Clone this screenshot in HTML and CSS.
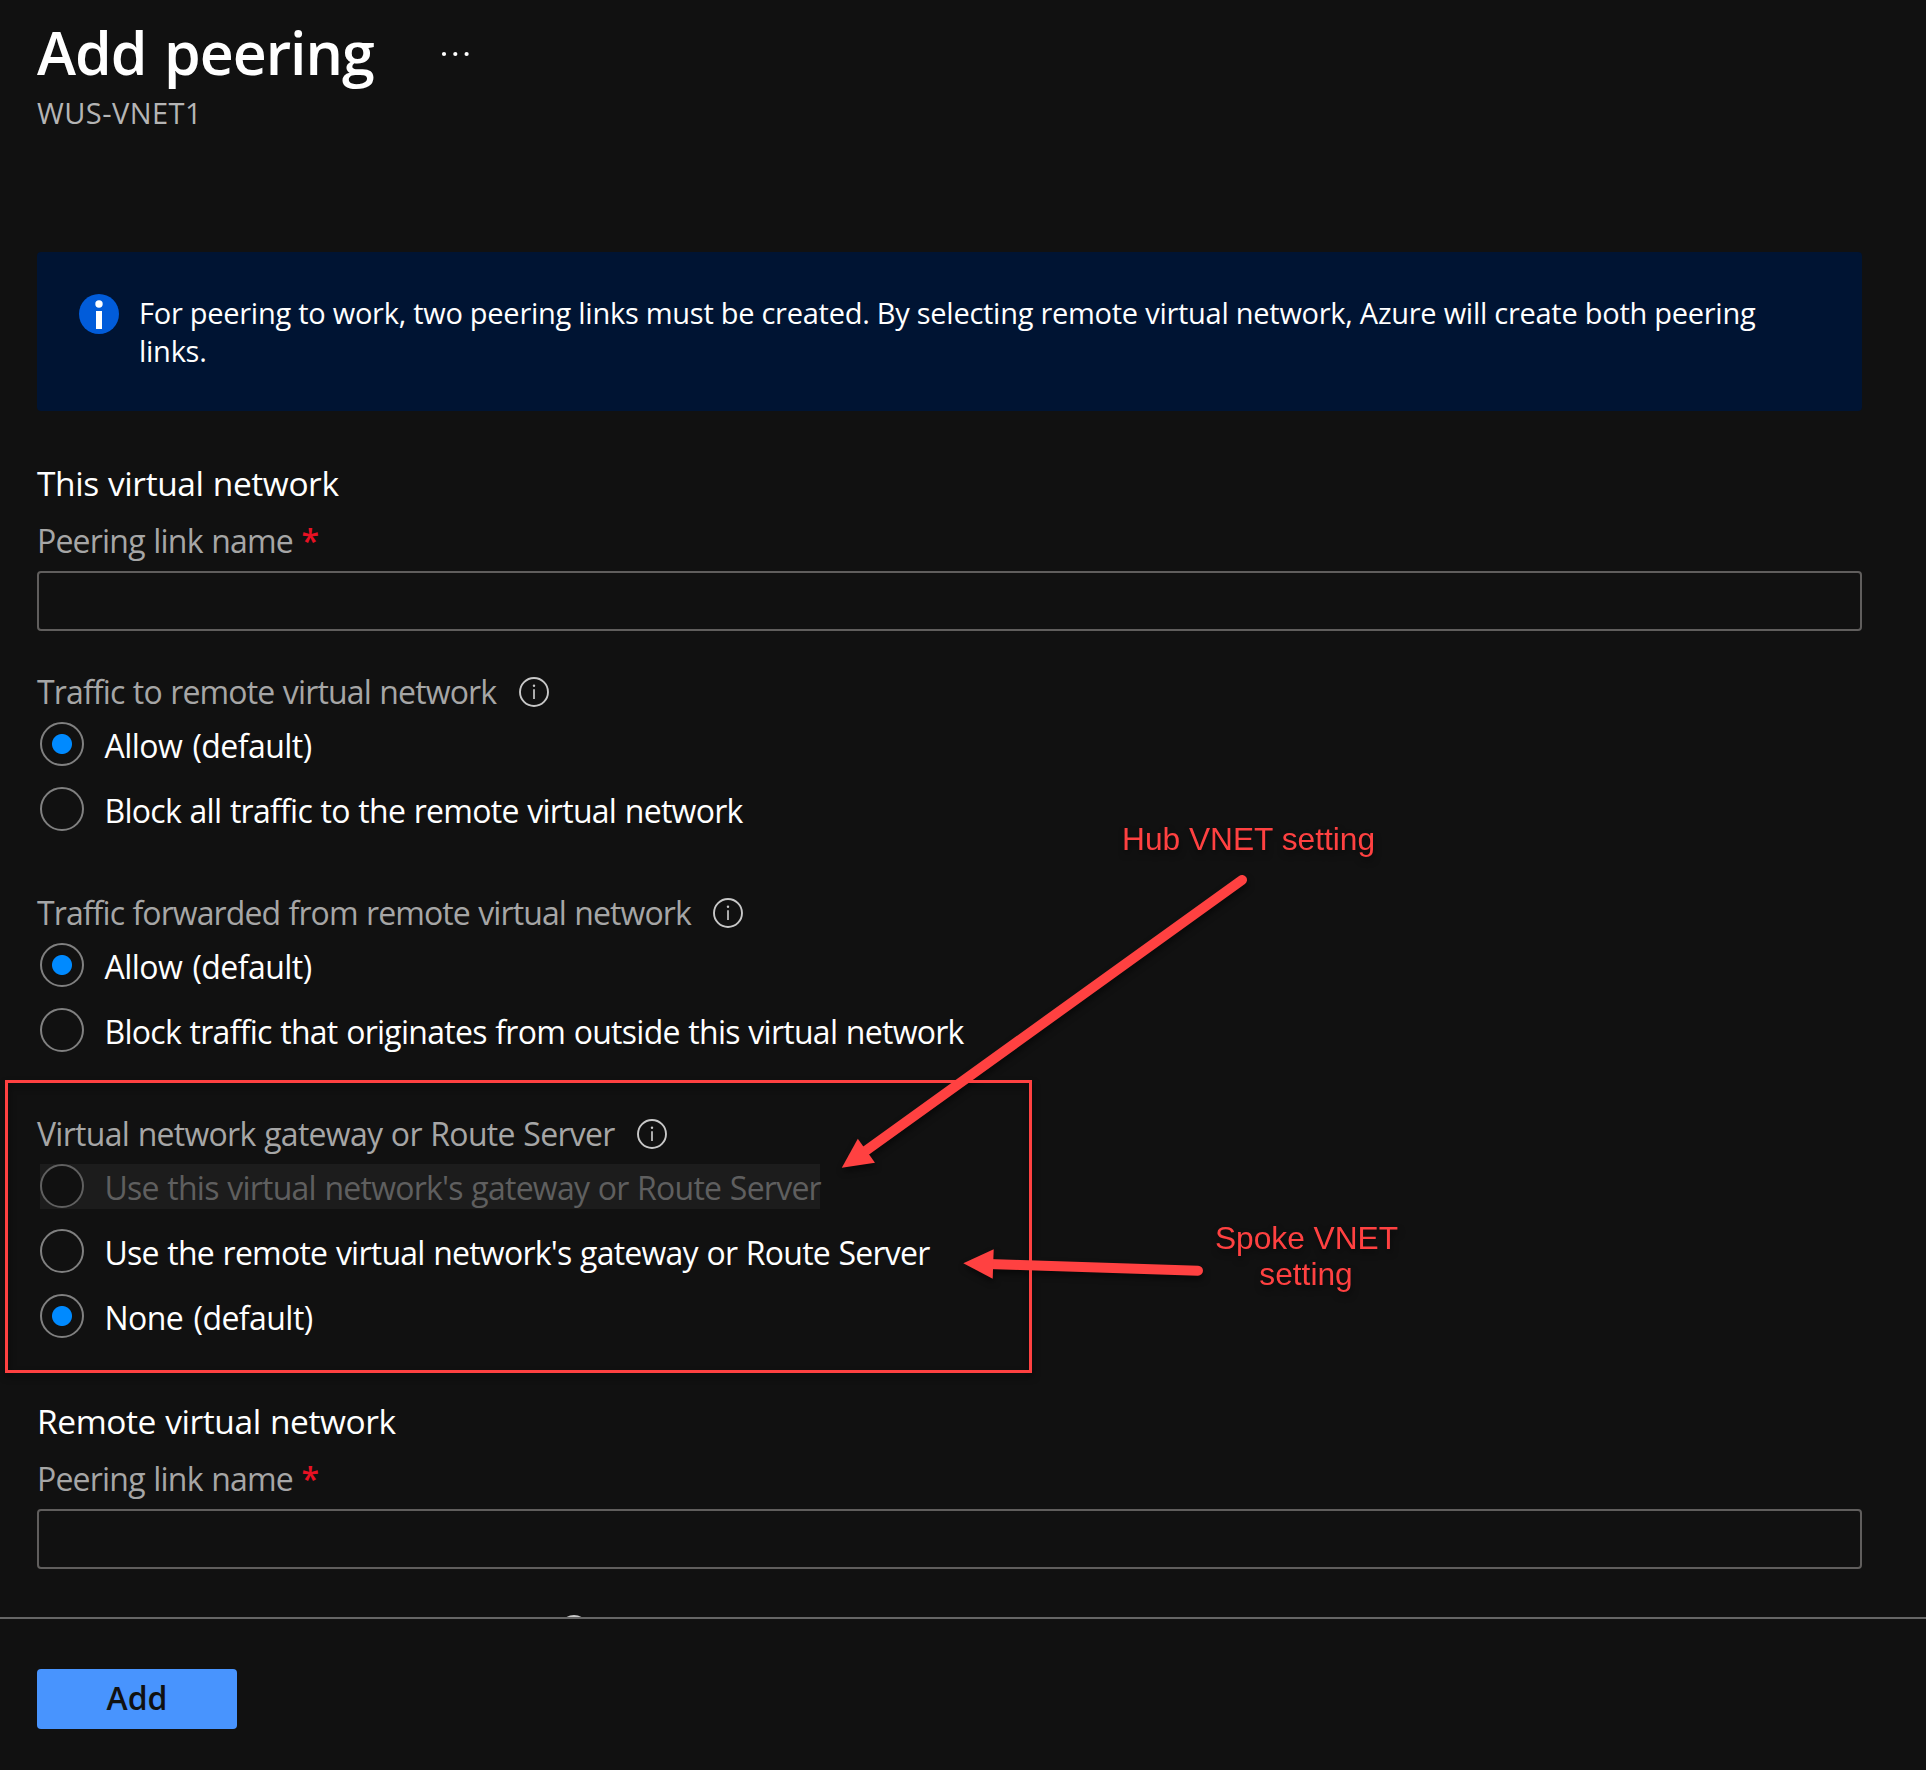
FILE: index.html
```html
<!DOCTYPE html>
<html lang="en">
<head>
<meta charset="utf-8">
<title>Add peering</title>
<link rel="stylesheet" href="styles.css">
</head>
<body>
<svg class="defs" width="0" height="0">
  <symbol id="info" viewBox="0 0 30 30">
    <circle cx="15" cy="15" r="14" fill="none" stroke="currentColor" stroke-width="1.9"/>
    <path d="M15 12.3v9.8" stroke="currentColor" stroke-width="1.7"/>
    <circle cx="15" cy="8.7" r="1.2" fill="currentColor"/>
  </symbol>
</svg>
<main class="blade">
  <header class="header">
    <div class="title-row">
      <h1 class="title">Add peering</h1>
      <svg class="more" viewBox="0 0 28 6"><circle cx="3" cy="3" r="2.1"/><circle cx="14.3" cy="3" r="2.1"/><circle cx="25.6" cy="3" r="2.1"/></svg>
    </div>
    <div class="subtitle">WUS-VNET1</div>
  </header>

  <div class="banner">
    <svg class="banner-icon" viewBox="0 0 40 40"><circle cx="20" cy="20" r="20" fill="#015cda"/><circle cx="20" cy="10" r="3.7" fill="#fff"/><path d="M17 17h6v18h-6z" fill="#fff"/></svg>
    <p class="banner-text">For peering to work, two peering links must be created. By selecting remote virtual network, Azure will create both peering<br>links.</p>
  </div>

  <section class="section">
    <h2 class="heading">This virtual network</h2>
    <label class="label" for="link-this"><span>Peering link name</span><span class="required">*</span></label>
    <input class="input" id="link-this" type="text">

    <div class="group first">
      <div class="label traffic"><span>Traffic to remote virtual network</span><svg class="info"><use href="#info"/></svg></div>
      <div class="option short"><span class="radio checked"></span><span>Allow (default)</span></div>
      <div class="option"><span class="radio"></span><span>Block all traffic to the remote virtual network</span></div>
    </div>
    <div class="group">
      <div class="label forwarded"><span>Traffic forwarded from remote virtual network</span><svg class="info"><use href="#info"/></svg></div>
      <div class="option short"><span class="radio checked"></span><span>Allow (default)</span></div>
      <div class="option"><span class="radio"></span><span>Block traffic that originates from outside this virtual network</span></div>
    </div>
    <div class="group">
      <div class="label gateway"><span>Virtual network gateway or Route Server</span><svg class="info"><use href="#info"/></svg></div>
      <div class="option long disabled"><span class="radio"></span><span>Use this virtual network's gateway or Route Server</span></div>
      <div class="option long"><span class="radio"></span><span>Use the remote virtual network's gateway or Route Server</span></div>
      <div class="option short"><span class="radio checked"></span><span>None (default)</span></div>
    </div>
  </section>

  <section class="section remote">
    <h2 class="heading">Remote virtual network</h2>
    <label class="label" for="link-remote"><span>Peering link name</span><span class="required">*</span></label>
    <input class="input" id="link-remote" type="text">
    <div class="group first">
      <div class="label clipped"><svg class="info"><use href="#info"/></svg></div>
    </div>
  </section>
</main>

<footer class="footer">
  <button class="add" type="button">Add</button>
</footer>

<svg class="annotations" viewBox="0 0 1926 1770">
  <rect x="6.5" y="1081.5" width="1024" height="290" fill="none" stroke="#ff4141" stroke-width="3"/>
  <path d="M1242 880L862 1153.500" fill="none" stroke="#ff4141" stroke-width="10" stroke-linecap="round"/>
  <path d="M841.800 1167.700L857.800 1138.700L875 1162.700Z" fill="#ff4141"/>
  <path d="M1198 1270.700L988 1264" fill="none" stroke="#ff4141" stroke-width="10" stroke-linecap="round"/>
  <path d="M963.300 1263.300L993.700 1249.300L992.700 1278.700Z" fill="#ff4141"/>
  <text x="1122" y="850">Hub VNET setting</text>
  <text x="1306.500" y="1249" text-anchor="middle">Spoke VNET</text>
  <text x="1306" y="1285" text-anchor="middle">setting</text>
</svg>
</body>
</html>
```
FILE: styles.css
```css
* { box-sizing: border-box; }
body {
  margin: 0;
  width: 1926px;
  height: 1770px;
  position: relative;
  overflow: hidden;
  background: #111;
  color: #fff;
  font-family: "Open Sans", "Noto Sans", sans-serif;
}
h1, h2, p { margin: 0; font-weight: 400; }
.defs { position: absolute; }
.blade { height: 1617px; padding: 11px 64px 0 37px; overflow: hidden; }
.title-row { display: flex; height: 80px; align-items: center; }
.title { font-size: 59px; line-height: 80px; font-weight: 600; letter-spacing: -1.05px; word-spacing: 3.5px; white-space: nowrap; width: 404px; padding-top: 2px; }
.more { width: 28px; height: 6px; fill: #fff; margin-top: 5px; }
.subtitle { font-size: 29px; line-height: 43px; letter-spacing: .45px; color: #b5b5b5; }
.banner {
  display: flex;
  height: 159px;
  margin-top: 118px;
  padding: 42px 0 0 42px;
  background: #001433;
  border-radius: 4px;
}
.banner-icon { width: 40px; height: 40px; margin-right: 20px; flex: none; }
.banner-text { font-size: 29px; line-height: 38px; letter-spacing: -.265px; white-space: nowrap; }
.section { margin-top: 49px; }
.section.remote { margin-top: 59px; }
.heading { font-size: 33.5px; line-height: 46px; margin-bottom: 10px; letter-spacing: -.42px; word-spacing: 1px; }
.label { display: flex; align-items: center; height: 50px; line-height: 50px; font-size: 32px; letter-spacing: -.8px; word-spacing: 1px; color: #a6a6a6; white-space: nowrap; }
.label.traffic { letter-spacing: -.86px; }
.label.forwarded { letter-spacing: -.91px; }
.label.gateway { letter-spacing: -.72px; }
.required { color: #e81123; font-weight: 600; margin-left: 8.5px; }
.info { width: 30px; height: 30px; margin-left: 22.5px; color: #c8c8c8; flex: none; }
.input {
  display: block;
  width: 100%;
  height: 60px;
  margin-top: 5px;
  background: transparent;
  border: 2px solid #605e5d;
  border-radius: 4px;
}
.group { margin-top: 56px; }
.group.first { margin-top: 36px; }
.option { display: flex; width: fit-content; height: 45px; margin: 5px 0 0 3px; font-size: 32px; line-height: 48px; letter-spacing: -.73px; word-spacing: 1px; white-space: nowrap; }
.option.short { letter-spacing: -.55px; word-spacing: 2.5px; }
.option.long { letter-spacing: -.76px; }
.option + .option { margin-top: 20px; }
.radio {
  width: 44px;
  height: 44px;
  margin-right: 20.5px;
  flex: none;
  border: 2px solid #808080;
  border-radius: 50%;
  background: #111;
}
.radio.checked { background: radial-gradient(circle, #008aff 9.5px, #111 10.5px); }
.option.disabled { width: 780px; background: #1c1c1c; color: #5f5f5f; }
.disabled .radio { border-color: #606060; }
.clipped { padding-left: 499px; }
.footer { height: 153px; padding: 50px 37px; border-top: 2px solid #666; }
.add {
  width: 200px;
  height: 60px;
  padding: 0 0 2px;
  border: 0;
  border-radius: 4px;
  background: #4894fe;
  color: #111;
  font: 600 32px/58px "Open Sans", "Noto Sans", sans-serif;
}
.annotations {
  position: absolute;
  inset: 0;
  width: 1926px;
  height: 1770px;
  pointer-events: none;
  filter: drop-shadow(1px 4px 3px rgba(0, 0, 0, .5));
}
.annotations text { font: 31.700px "Liberation Sans", Arial, sans-serif; fill: #ff4141; }
```
